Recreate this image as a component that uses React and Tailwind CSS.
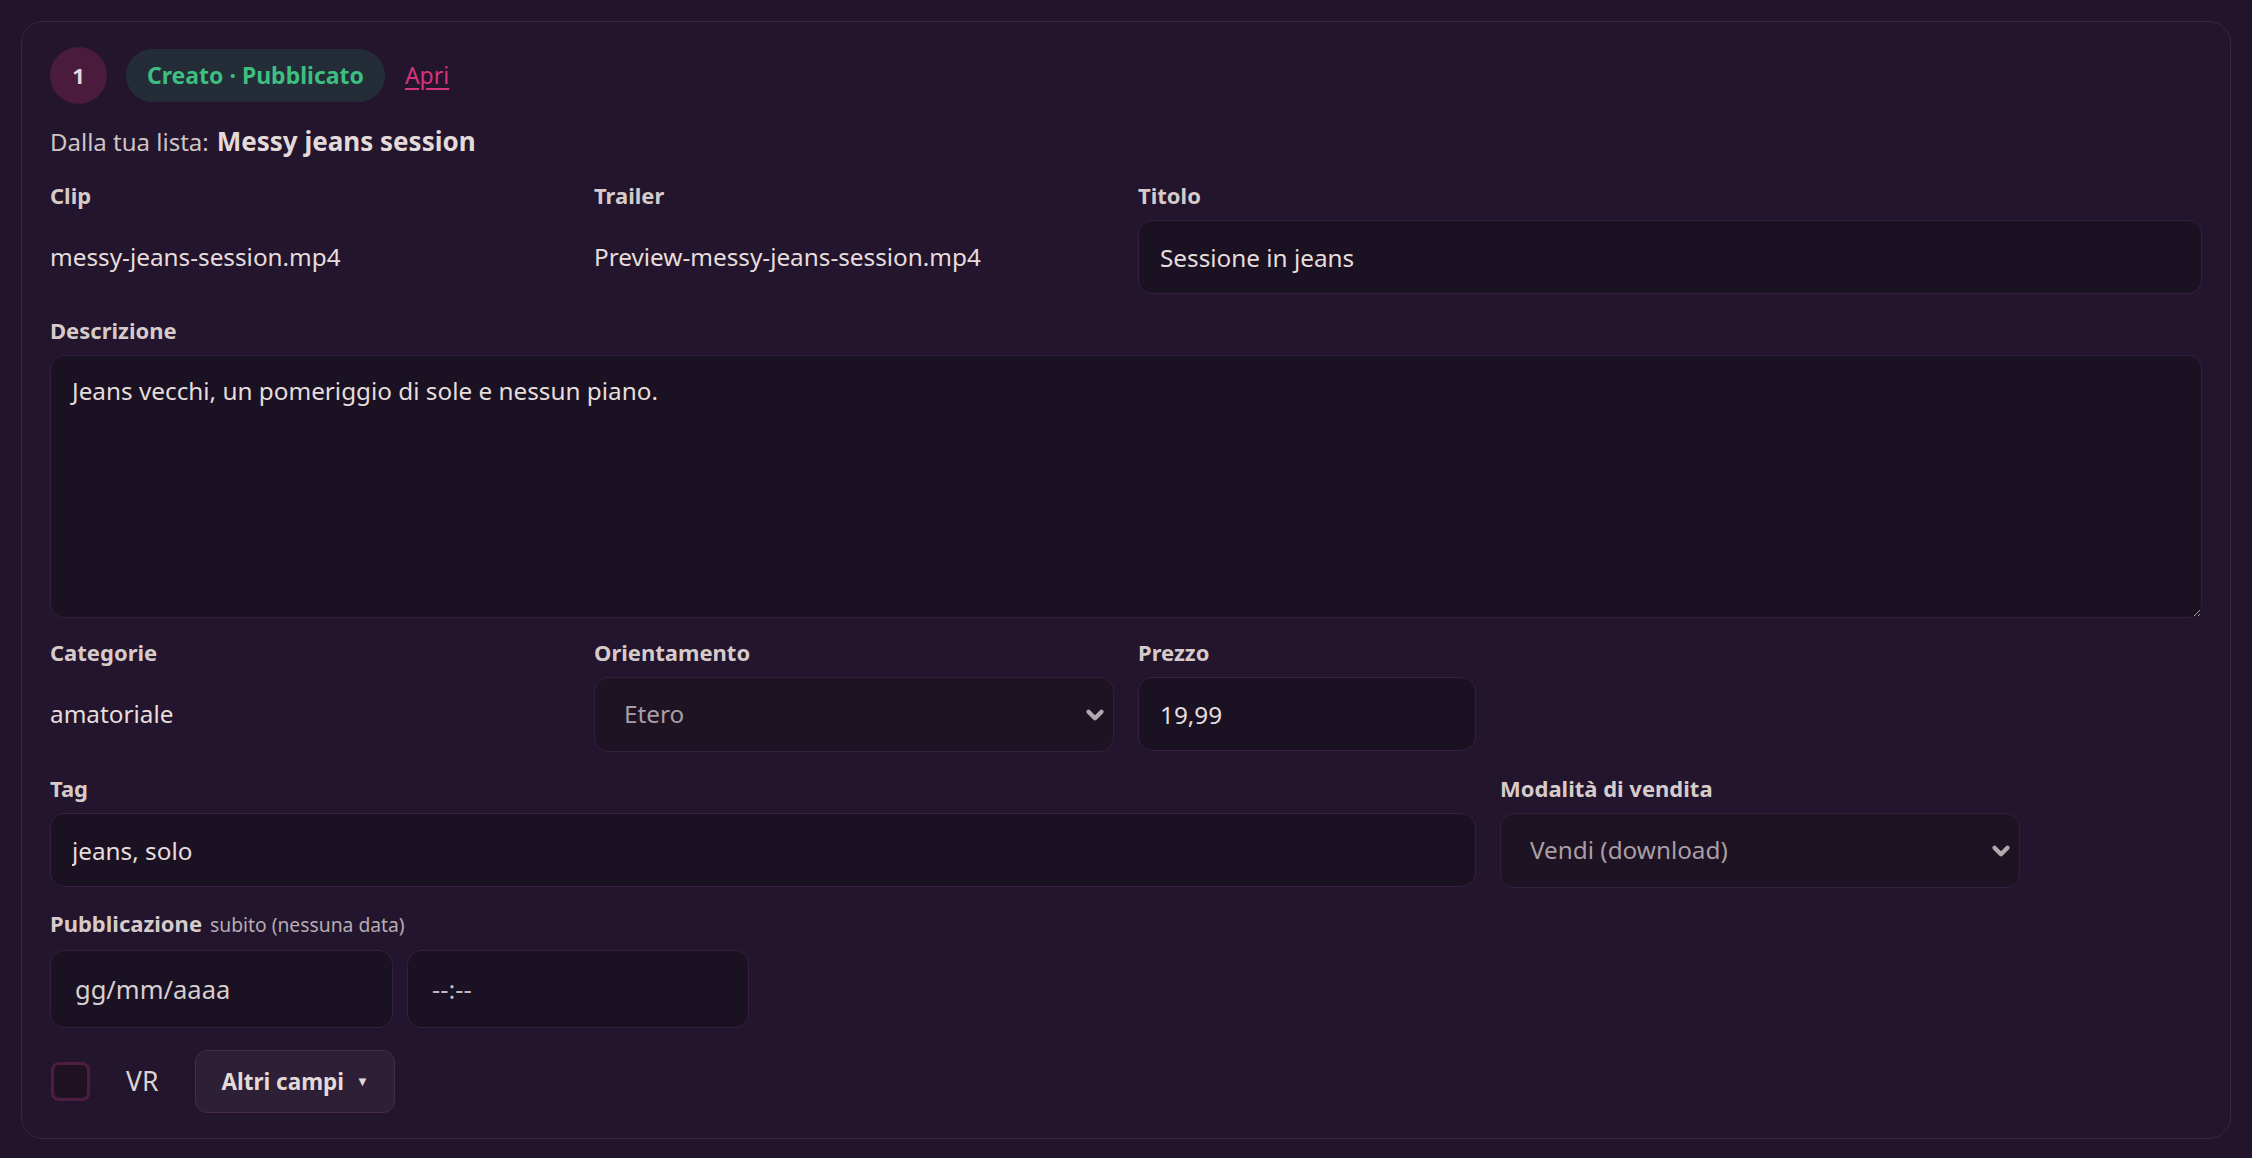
import { ChevronDown } from "lucide-react";

const font = { fontFamily: "'Noto Sans', 'Open Sans', sans-serif" };

function Label({ children }) {
  return (
    <div className="text-[22px] leading-[30px] font-bold text-[#d7cbca] mb-[10px]">{children}</div>
  );
}

function TextInput({ value, className = "" }) {
  return (
    <input
      type="text"
      defaultValue={value}
      className={`h-[74px] w-full rounded-[14px] border border-[#34203d] bg-[#1a1123] px-[21px] text-[24.3px] text-[#e6dddc] outline-none ${className}`}
    />
  );
}

function Select({ value, className = "" }) {
  return (
    <div className={`relative ${className}`}>
      <select
        defaultValue={value}
        className="h-[75px] w-full appearance-none rounded-[14px] border border-[#34203d] bg-[#1e1323] pl-[29px] pr-[40px] text-[24.3px] text-[#a99ea6] outline-none"
      >
        <option>{value}</option>
      </select>
      <ChevronDown
        size={26}
        strokeWidth={4}
        className="pointer-events-none absolute right-[6px] top-1/2 -translate-y-1/2 text-[#b3a9b0]"
      />
    </div>
  );
}

export default function App() {
  return (
    <div className="min-h-[1158px] bg-[#21142b] p-[21px]" style={font}>
      <div className="rounded-[22px] border border-[#3a2444] bg-[#22152d] px-[28px] pt-[25px] pb-[25px]">
        {/* header */}
        <div className="flex items-center">
          <div className="flex size-[57px] items-center justify-center rounded-full bg-[#4a1b3d] text-[22px] font-bold text-[#e3d9d8]">
            1
          </div>
          <span className="ml-[19px] flex h-[53px] items-center rounded-full bg-[#242c37] px-[21px] text-[23px] font-bold text-[#3cbf80]">
            Creato · Pubblicato
          </span>
          <a href="#" className="ml-[20px] text-[23px] text-[#d6337f] underline underline-offset-[4px]">
            Apri
          </a>
        </div>

        <div className="mt-[19px] flex items-baseline gap-[8px] leading-[36px]">
          <span className="text-[24px] text-[#cfc4c3]">Dalla tua lista:</span>
          <span className="text-[26px] font-bold text-[#e3dad9]">Messy jeans session</span>
        </div>

        {/* row 1 */}
        <div className="mt-[20px] grid grid-cols-4 gap-x-[24px]">
          <div>
            <Label>Clip</Label>
            <div className="flex h-[74px] items-center text-[24.3px] text-[#e6dddc]">messy-jeans-session.mp4</div>
          </div>
          <div>
            <Label>Trailer</Label>
            <div className="flex h-[74px] items-center text-[24.3px] text-[#e6dddc]">Preview-messy-jeans-session.mp4</div>
          </div>
          <div className="col-span-2">
            <Label>Titolo</Label>
            <TextInput value="Sessione in jeans" />
          </div>
        </div>

        {/* descrizione */}
        <div className="mt-[21px]">
          <Label>Descrizione</Label>
          <textarea
            defaultValue="Jeans vecchi, un pomeriggio di sole e nessun piano."
            className="block h-[263px] w-full rounded-[14px] border border-[#34203d] bg-[#1a1123] px-[21px] py-[19px] text-[24.3px] leading-[32px] text-[#e6dddc] outline-none"
          />
        </div>

        {/* categorie / orientamento / prezzo */}
        <div className="mt-[19px] grid grid-cols-4 gap-x-[24px]">
          <div>
            <Label>Categorie</Label>
            <div className="flex h-[75px] items-center text-[24.3px] text-[#e6dddc]">amatoriale</div>
          </div>
          <div>
            <Label>Orientamento</Label>
            <Select value="Etero" />
          </div>
          <div>
            <Label>Prezzo</Label>
            <TextInput value="19,99" className="!w-[338px]" />
          </div>
        </div>

        {/* tag / modalità */}
        <div className="mt-[21px] flex gap-x-[24px]">
          <div className="w-[1426px]">
            <Label>Tag</Label>
            <TextInput value="jeans, solo" />
          </div>
          <div className="w-[520px]">
            <Label>Modalità di vendita</Label>
            <Select value="Vendi (download)" />
          </div>
        </div>

        {/* pubblicazione */}
        <div className="mt-[20px]">
          <div className="mb-[10px] flex items-baseline gap-[8px] leading-[30px]">
            <span className="text-[22px] font-bold text-[#d7cbca]">Pubblicazione</span>
            <span className="text-[19.3px] text-[#b7abb1]">subito (nessuna data)</span>
          </div>
          <div className="flex gap-[14px]">
            <TextInput value="gg/mm/aaaa" className="!h-[78px] !w-[343px] !pl-[24px] !text-[25.5px] !text-[#d9cfd0]" />
            <TextInput value="--:--" className="!h-[78px] !w-[342px] !pl-[24px] !text-[25.5px] !text-[#c2b8bb]" />
          </div>
        </div>

        {/* bottom */}
        <div className="mt-[22px] flex items-center">
          <div className="ml-[1px] size-[39px] rounded-[8px] border-[3px] border-[#4e1e42] bg-[#1f1322]" />
          <span className="ml-[36px] text-[26.5px] text-[#ddd3d2]">VR</span>
          <button className="ml-[37px] flex h-[63px] items-center gap-[12px] rounded-[12px] border border-[#47294a] bg-[#2c1f36] px-[25px] text-[22.5px] font-bold text-[#e3d9d8]">
            Altri campi
            <span className="text-[13px]">▼</span>
          </button>
        </div>
      </div>
    </div>
  );
}
